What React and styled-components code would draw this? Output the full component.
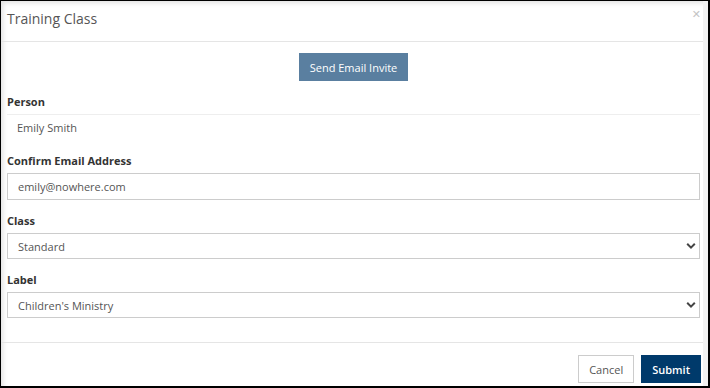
import styled, { createGlobalStyle } from "styled-components";

const GlobalStyle = createGlobalStyle`
  html, body {
    margin: 0;
    padding: 0;
    background: #fff;
  }
  body {
    font-family: "Open Sans", "Liberation Sans", sans-serif;
    font-size: 11px;
    color: #333;
  }
`;

const Frame = styled.div`
  width: 710px;
  height: 388px;
  box-sizing: border-box;
  border: 1px solid #000;
  border-right-width: 2px;
  border-bottom-width: 2px;
  background: #f2f2f2;
  display: flex;
  overflow: hidden;
`;

const Modal = styled.div`
  flex: 1;
  margin-right: 5px;
  background: #fff;
  display: flex;
  flex-direction: column;
  box-shadow: inset 4px 4px 5px -2px rgba(0, 0, 0, 0.12);
`;

const Header = styled.div`
  height: 40px;
  flex-shrink: 0;
  display: flex;
  align-items: center;
  justify-content: space-between;
  padding: 0 2px 0 6px;
  border-bottom: 1px solid #e5e5e5;
`;

const Title = styled.h4`
  margin: 0;
  font-size: 14px;
  font-weight: 400;
  color: #555;
  margin-top: -6px;
`;

const Close = styled.button`
  border: 0;
  background: none;
  padding: 0;
  margin-top: -13px;
  font-family: "DejaVu Sans", sans-serif;
  font-size: 11px;
  line-height: 1;
  color: #c4c4c4;
  cursor: pointer;
`;

const Body = styled.div`
  flex: 1;
  padding: 11px 3px 0 6px;
  border-bottom: 1px solid #e5e5e5;
`;

const Center = styled.div`
  display: flex;
  justify-content: center;
  margin-bottom: 13px;
`;

const Button = styled.button`
  height: 28px;
  box-sizing: border-box;
  padding: 0 ${(p) => p.$pad || 11}px;
  font-family: inherit;
  font-size: 11px;
  font-weight: ${(p) => (p.$bold ? 600 : 400)};
  border: 1px solid ${(p) => p.$border};
  background: ${(p) => p.$bg};
  color: ${(p) => p.$color};
  cursor: pointer;
`;

const Group = styled.div`
  margin-bottom: 13px;
`;

const Label = styled.label`
  display: block;
  font-weight: 700;
  line-height: 16px;
  margin-bottom: 4px;
  color: #333;
`;

const Static = styled.div`
  height: 26px;
  box-sizing: border-box;
  border-top: 1px solid #eee;
  padding-left: 10px;
  display: flex;
  align-items: center;
  color: #555;
`;

const Field = styled.div`
  height: ${(p) => p.$h || 27}px;
  box-sizing: border-box;
  border: 1px solid #ccc;
  padding: 0 3px 0 10px;
  display: flex;
  align-items: center;
  justify-content: space-between;
  color: #555;
`;

const Footer = styled.div`
  flex-shrink: 0;
  display: flex;
  justify-content: flex-end;
  gap: 7px;
  padding: 12px 2px 3px 0;
`;

const Chevron = () => (
  <svg width="10" height="8" viewBox="0 0 10 8">
    <path d="M1.2 1.8 L5 5.6 L8.8 1.8" fill="none" stroke="#444" strokeWidth="2" />
  </svg>
);

export default function App() {
  return (
    <>
      <GlobalStyle />
      <Frame>
        <Modal>
          <Header>
            <Title>Training Class</Title>
            <Close>✕</Close>
          </Header>
          <Body>
            <Center>
              <Button $bg="#5a7fa0" $border="#5a7fa0" $color="#fff" $pad={10}>
                Send Email Invite
              </Button>
            </Center>
            <Group>
              <Label>Person</Label>
              <Static>Emily Smith</Static>
            </Group>
            <Group>
              <Label>Confirm Email Address</Label>
              <Field>emily@nowhere.com</Field>
            </Group>
            <Group>
              <Label>Class</Label>
              <Field $h={26}>
                Standard
                <Chevron />
              </Field>
            </Group>
            <Group>
              <Label>Label</Label>
              <Field $h={26}>
                Children's Ministry
                <Chevron />
              </Field>
            </Group>
          </Body>
          <Footer>
            <Button $bg="#fff" $border="#ccc" $color="#555" $pad={10}>
              Cancel
            </Button>
            <Button $bg="#003a6b" $border="#003a6b" $color="#fff" $bold $pad={10}>
              Submit
            </Button>
          </Footer>
        </Modal>
      </Frame>
    </>
  );
}
